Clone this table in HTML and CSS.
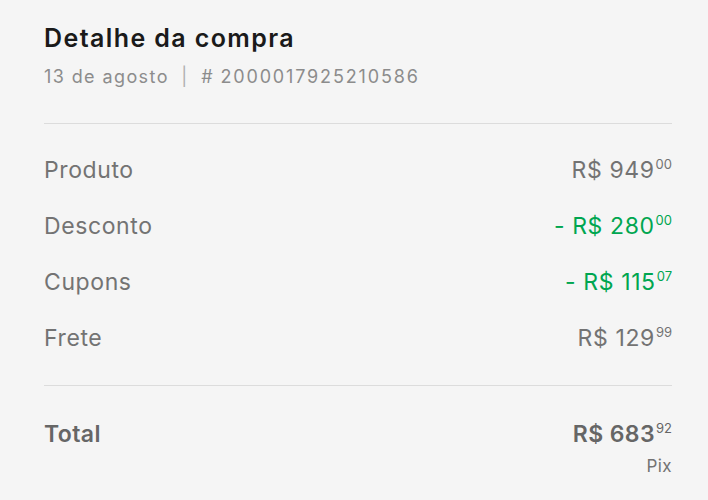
FILE: index.html
```html
<!DOCTYPE html>
<html lang="pt-BR">
<head>
  <meta charset="UTF-8">
  <title>Detalhe da compra</title>
  <link rel="stylesheet" href="styles.css">
</head>
<body>
  <div class="detail">
    <header class="detail-header">
      <h1>Detalhe da compra</h1>
      <p class="meta">13 de agosto <span class="sep">|</span> # <span class="order-id">2000017925210586</span></p>
    </header>
    <ul class="lines">
      <li class="line">
        <span class="label">Produto</span>
        <span class="price">R$ 949<sup>00</sup></span>
      </li>
      <li class="line">
        <span class="label">Desconto</span>
        <span class="price discount">- R$ 280<sup>00</sup></span>
      </li>
      <li class="line">
        <span class="label">Cupons</span>
        <span class="price discount">- R$ 115<sup>07</sup></span>
      </li>
      <li class="line">
        <span class="label">Frete</span>
        <span class="price">R$ 129<sup>99</sup></span>
      </li>
    </ul>
    <div class="total">
      <span class="label">Total</span>
      <div class="total-value">
        <span class="price">R$ 683<sup>92</sup></span>
        <span class="method">Pix</span>
      </div>
    </div>
  </div>
</body>
</html>
```

FILE: styles.css
```css
body {
  margin: 0;
  background: #f5f5f5;
  font-family: Inter, 'Open Sans', sans-serif;
  color: #737373;
}
.detail {
  padding: 22px 36px 0 44px;
}
.detail-header {
  border-bottom: 1px solid #dcdcdc;
  padding-bottom: 35px;
}
.detail-header h1 {
  margin: 0;
  font-size: 25px;
  line-height: 32px;
  font-weight: 600;
  letter-spacing: 1.4px;
  color: #1a1a1a;
}
.meta {
  margin: 12px 0 0;
  font-size: 18px;
  line-height: 22px;
  letter-spacing: 1.4px;
  color: #8c8c8c;
}
.sep {
  margin: 0 6px;
  color: #b0b0b0;
}
.order-id {
  letter-spacing: 1.85px;
}
.lines {
  list-style: none;
  margin: 0;
  padding: 18px 0 19px;
  border-bottom: 1px solid #dcdcdc;
}
.line {
  display: flex;
  justify-content: space-between;
  align-items: center;
  height: 56px;
  font-size: 23px;
  letter-spacing: 0.6px;
}
.price {
  font-size: 23px;
  color: #737373;
}
.price sup {
  font-size: 13px;
  letter-spacing: 0;
  vertical-align: 9px;
  margin-left: 1px;
}
.discount {
  color: #00a650;
}
.total {
  display: flex;
  justify-content: space-between;
  align-items: flex-start;
  padding-top: 34px;
  font-size: 23px;
  letter-spacing: 0.4px;
}
.total .label,
.total .price {
  color: #666;
  font-weight: 600;
}
.total .price sup {
  font-weight: 400;
}
.total-value {
  display: flex;
  flex-direction: column;
  align-items: flex-end;
}
.method {
  font-size: 17px;
  margin-top: 8px;
  color: #737373;
}
```
